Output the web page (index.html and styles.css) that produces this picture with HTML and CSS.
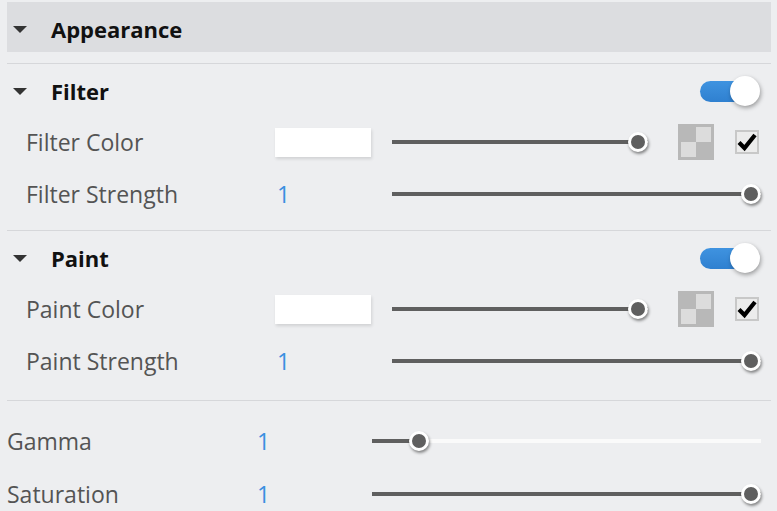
FILE: index.html
```html
<!DOCTYPE html>
<html>
<head>
<meta charset="utf-8">
<link rel="stylesheet" href="styles.css">
</head>
<body>
<div class="panel">
  <div class="group-head">
    <span class="caret"></span>
    <span class="group-title">Appearance</span>
  </div>
  <div class="sep first"></div>

  <section class="sub">
    <div class="sub-head">
      <span class="caret"></span>
      <span class="sub-title">Filter</span>
      <span class="toggle"><span class="toggle-track"></span><span class="toggle-knob"></span></span>
    </div>
    <div class="row color-row">
      <span class="label">Filter Color</span>
      <span class="swatch"></span>
      <div class="slider"><div class="track"><div class="range"><div class="fill" style="width:100%"></div><span class="knob" style="left:100%"></span></div></div></div>
      <span class="checker"><i></i><i class="lt"></i><i class="lt"></i><i></i></span>
      <span class="checkbox"><svg viewBox="0 0 20 20" width="20" height="20"><path d="M2 10.5 L7.5 16 L18 3" fill="none" stroke="#000" stroke-width="4.2" stroke-linejoin="miter" stroke-linecap="butt"/></svg></span>
    </div>
    <div class="row">
      <span class="label">Filter Strength</span>
      <span class="num">1</span>
      <div class="slider wide"><div class="track"><div class="range"><div class="fill" style="width:100%"></div><span class="knob" style="left:100%"></span></div></div></div>
    </div>
  </section>
  <div class="sep"></div>

  <section class="sub second">
    <div class="sub-head">
      <span class="caret"></span>
      <span class="sub-title">Paint</span>
      <span class="toggle"><span class="toggle-track"></span><span class="toggle-knob"></span></span>
    </div>
    <div class="row color-row">
      <span class="label">Paint Color</span>
      <span class="swatch"></span>
      <div class="slider"><div class="track"><div class="range"><div class="fill" style="width:100%"></div><span class="knob" style="left:100%"></span></div></div></div>
      <span class="checker"><i></i><i class="lt"></i><i class="lt"></i><i></i></span>
      <span class="checkbox"><svg viewBox="0 0 20 20" width="20" height="20"><path d="M2 10.5 L7.5 16 L18 3" fill="none" stroke="#000" stroke-width="4.2" stroke-linejoin="miter" stroke-linecap="butt"/></svg></span>
    </div>
    <div class="row">
      <span class="label">Paint Strength</span>
      <span class="num">1</span>
      <div class="slider wide"><div class="track"><div class="range"><div class="fill" style="width:100%"></div><span class="knob" style="left:100%"></span></div></div></div>
    </div>
  </section>
  <div class="sep"></div>

  <section class="plain">
    <div class="row top">
      <span class="label">Gamma</span>
      <span class="num">1</span>
      <div class="slider wide light"><div class="track"><div class="range"><div class="fill" style="width:12.4%"></div><span class="knob" style="left:12.4%"></span></div></div></div>
    </div>
    <div class="row top">
      <span class="label">Saturation</span>
      <span class="num">1</span>
      <div class="slider wide"><div class="track"><div class="range"><div class="fill" style="width:100%"></div><span class="knob" style="left:100%"></span></div></div></div>
    </div>
  </section>
</div>
</body>
</html>
```

FILE: styles.css
```css
* { box-sizing: border-box; }
html, body {
  margin: 0;
  padding: 0;
  background: #edeef0;
  overflow: hidden;
}
body {
  font-family: "Open Sans", "Noto Sans", "Liberation Sans", sans-serif;
  width: 777px;
  height: 511px;
}
.panel {
  padding: 2px 6px 0 7px;
}
.group-head {
  height: 50px;
  padding-top: 4px;
  background: #dcdde0;
  display: flex;
  align-items: center;
}
.caret {
  width: 0;
  height: 0;
  border-left: 7px solid transparent;
  border-right: 7px solid transparent;
  border-top: 7px solid #333;
  margin-left: 6px;
  margin-right: 24px;
}
.group-title, .sub-title {
  font-weight: 700;
  font-size: 22px;
  color: #111;
}
.sep {
  height: 1px;
  background: #d6d7da;
}
.sep.first { margin-top: 11px; }
.sub {
  padding: 2px 0 10px 0;
}
.sub.second { padding-bottom: 13px; }
.sub-head {
  height: 50px;
  display: flex;
  align-items: center;
}
.sub-head .sub-title { flex: 1; }
.toggle {
  position: relative;
  width: 60px;
  height: 30px;
  margin-right: 11px;
}
.toggle-track {
  position: absolute;
  left: 0;
  top: 5px;
  width: 48px;
  height: 21px;
  border-radius: 11px;
  background: linear-gradient(#3f93e0, #2f80d0);
}
.toggle-knob {
  position: absolute;
  right: 0;
  top: 0;
  width: 30px;
  height: 30px;
  border-radius: 50%;
  background: #fff;
  box-shadow: 1px 2px 4px rgba(0,0,0,0.35);
}
.row {
  height: 52px;
  display: grid;
  grid-template-columns: 249px 117px 1fr;
  align-items: center;
  padding-left: 19px;
  padding-right: 10px;
}
.row.color-row {
  grid-template-columns: 249px 117px 1fr auto auto;
  padding-right: 12px;
}
.row.top {
  height: 53px;
  grid-template-columns: 248px 117px 1fr;
  padding-left: 0;
}
.plain { padding-top: 13px; }
.label {
  font-size: 23px;
  color: #545454;
  white-space: nowrap;
}
.num {
  font-size: 23px;
  color: #3a8ee0;
  padding-left: 2px;
}
.swatch {
  width: 96px;
  height: 29px;
  background: #fff;
  box-shadow: 1px 2px 3px rgba(0,0,0,0.12);
}
.slider {
  height: 20px;
  display: flex;
  align-items: center;
}
.track {
  position: relative;
  flex: 1;
  height: 4px;
  background: #5f5f5f;
}
.slider.light .track { background: #fafafa; }
.range {
  position: absolute;
  left: 0;
  top: 0;
  bottom: 0;
  right: 10px;
}
.fill {
  height: 100%;
  background: #5f5f5f;
}
.knob {
  position: absolute;
  top: 50%;
  width: 20px;
  height: 20px;
  margin: -10px 0 0 -10px;
  border-radius: 50%;
  background: #5f5f5f;
  border: 3px solid #fff;
  box-shadow: 1px 2px 3px rgba(0,0,0,0.45);
}
.checker {
  display: inline-grid;
  grid-template-columns: 15px 15px;
  grid-template-rows: 15px 15px;
  padding: 3px;
  width: 36px;
  height: 36px;
  background: #b8b8b8;
  margin-left: 30px;
}
.checker i { display: block; }
.checker i.lt { background: #dcdcdc; }
.checkbox {
  display: inline-flex;
  align-items: center;
  justify-content: center;
  width: 24px;
  height: 24px;
  border: 2px solid #c8c8c8;
  background: #ececec;
  margin-left: 21px;
}
.checkbox svg { overflow: visible; }
```
